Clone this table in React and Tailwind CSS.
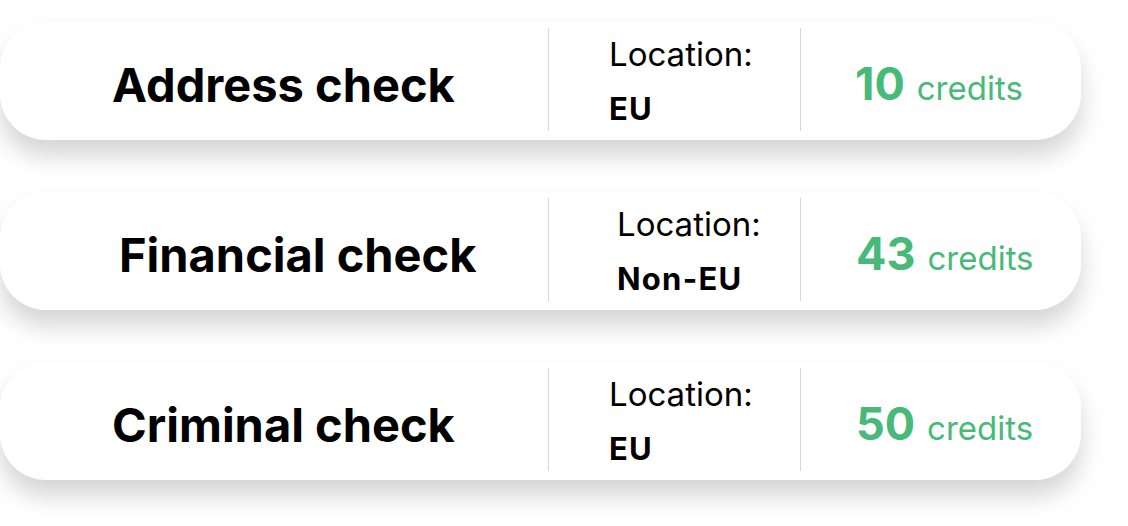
const checks = [
  { title: 'Address check', location: 'EU', credits: 10, titlePad: 'pl-[112px]', locPad: 'pl-[60px]', creditPad: 'pl-[54px]' },
  { title: 'Financial check', location: 'Non-EU', credits: 43, titlePad: 'pl-[119px]', locPad: 'pl-[68px]', creditPad: 'pl-[55px]' },
  { title: 'Criminal check', location: 'EU', credits: 50, titlePad: 'pl-[112px]', locPad: 'pl-[60px]', creditPad: 'pl-[55px]' },
];

export default function App() {
  return (
    <div className="w-[1128px] h-[526px] bg-white overflow-hidden pt-[22px] font-['Inter',sans-serif]">
      <div className="flex flex-col gap-[52px]">
        {checks.map((c) => (
          <div
            key={c.title}
            className="w-[1081px] h-[118px] bg-white rounded-[46px] shadow-[0_16px_24px_rgba(0,0,0,0.17)] flex items-start"
          >
            {/* title */}
            <div className={`w-[548px] ${c.titlePad} mt-[39px] text-[47px] font-bold text-black leading-none whitespace-nowrap`}>
              {c.title}
            </div>

            {/* location */}
            <div className={`w-[252px] h-[103px] mt-[6px] border-l border-[#d6d6d6] ${c.locPad} pt-[10px]`}>
              <div className="text-[33px] text-black leading-none">Location:</div>
              <div className="text-[31px] font-bold text-black leading-none tracking-[0.04em] mt-[22px]">{c.location}</div>
            </div>

            {/* credits */}
            <div className={`flex-1 h-[103px] mt-[6px] border-l border-[#d6d6d6] ${c.creditPad} pt-[33px]`}>
              <div className="flex items-baseline text-[#47b978] leading-none">
                <span className="text-[45px] font-bold">{c.credits}</span>
                <span className="text-[33px] ml-[12px]">credits</span>
              </div>
            </div>
          </div>
        ))}
      </div>
    </div>
  );
}
